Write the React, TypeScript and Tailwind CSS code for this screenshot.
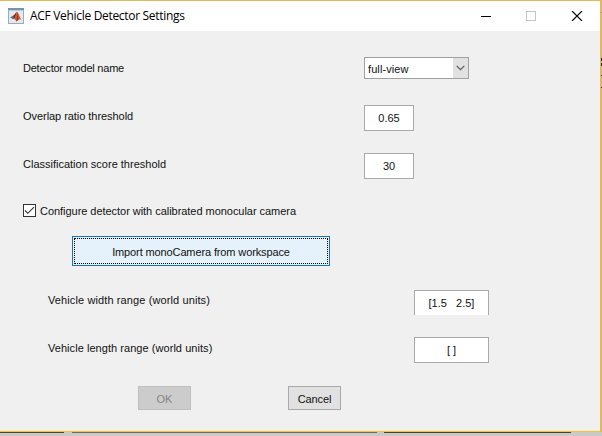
import React from "react";

function MatlabIcon() {
  return (
    <svg width="16" height="16" viewBox="0 0 16 16" className="block shrink-0">
      <rect x="0.5" y="0.5" width="15" height="15" fill="#e2eaf0" stroke="#9aacba" />
      <rect x="0" y="0" width="16" height="2" fill="#7893a8" />
      <rect x="1" y="2" width="14" height="1" fill="#b4d0e2" />
      <path d="M2 9.6 5.3 7.6 7.2 8.8 5.3 11.2Z" fill="#3d7fa8" />
      <path d="M5.3 7.6C7 7 7.6 4.2 8.9 3.8L7.4 9.3 5.6 11Z" fill="#7a2d22" />
      <path d="M8.9 3.8C10.6 4.6 11.6 9.6 13.8 12.2 12.4 10.9 11.2 11 10 12.2L8.4 13.4C7.8 12 7 11.1 5.6 11 7.8 9.6 7.8 5.6 8.9 3.8Z" fill="#d4562b" />
      <path d="M8.9 3.8C9.7 6 9.3 10 8.4 13.4L10 12.2C10.6 9.4 9.8 5.8 8.9 3.8Z" fill="#9c2f1c" />
    </svg>
  );
}

function Field({ children, className }: { children: React.ReactNode; className: string }) {
  return (
    <div className={`flex shrink-0 items-center justify-center whitespace-pre border-[#a9a9a9] bg-white ${className}`}>
      {children}
    </div>
  );
}

export default function App() {
  return (
    <div className="flex h-[436px] w-[602px] flex-col overflow-hidden bg-[#c9c9c5] font-['Liberation_Sans',Arial,sans-serif] text-[11px] leading-[14px] text-[#111]">
      <div className="flex h-[432px] w-full">
        <div className="flex w-[600px] flex-col border-t border-b border-t-[#dfbb55] border-b-[#e8c458] bg-[#f0f0f0]">
          <header className="flex h-[30px] shrink-0 items-center bg-white pl-2">
            <MatlabIcon />
            <h1 className="ml-[6px] w-[155px] whitespace-nowrap font-['Open_Sans','Noto_Sans',sans-serif] text-[12px] leading-[16px] tracking-[-0.31px] text-black">
              ACF Vehicle Detector Settings
            </h1>
            <svg width="153" height="10" viewBox="0 0 153 10" className="ml-[296px] block shrink-0" fill="none">
              <path d="M0 5.5H10" stroke="#000" />
              <rect x="45.5" y="0.5" width="9" height="9" stroke="#c4c4c4" />
              <path d="M91 0 101 10M101 0 91 10" stroke="#000" strokeWidth="1.1" />
            </svg>
          </header>

          <main className="flex flex-1 flex-col border-b border-[#f6e9bd] pt-[26px]">
            <div className="flex h-[22px] items-center pl-[23px]">
              <span className="w-[341px] whitespace-nowrap tracking-[-0.22px]">Detector model name</span>
              <div className="flex h-[22px] w-[105px] border border-[#a0a0a0] bg-white">
                <span className="flex-1 pt-1 pl-[3px] tracking-[0.1px]">full-view</span>
                <span className="flex w-[15px] items-center justify-center bg-[#e1e1e1]">
                  <svg width="9" height="6" viewBox="0 0 9 6" fill="none">
                    <path d="M0.7 0.8 4.5 4.6 8.3 0.8" stroke="#555" strokeWidth="1.1" />
                  </svg>
                </span>
              </div>
            </div>
            <div className="mt-[26px] flex h-[26px] items-center pl-[23px]">
              <span className="w-[341px] whitespace-nowrap pb-1 tracking-[-0.05px]">Overlap ratio threshold</span>
              <Field className="h-[26px] w-[50px] border">0.65</Field>
            </div>
            <div className="mt-[22px] flex h-[26px] items-center pl-[23px]">
              <span className="w-[341px] whitespace-nowrap pb-1">Classification score threshold</span>
              <Field className="h-[26px] w-[50px] border">30</Field>
            </div>
            <div className="mt-[25px] flex h-[13px] items-center pl-[23px]">
              <svg width="13" height="13" viewBox="0 0 13 13" className="mr-1 block shrink-0">
                <rect x="0.5" y="0.5" width="12" height="12" fill="#fff" stroke="#333" />
                <path d="M2 6.5 4.8 9.3 11 3.1" fill="none" stroke="#333" strokeWidth="1.1" />
              </svg>
              <span className="whitespace-nowrap tracking-[-0.04px]">Configure detector with calibrated monocular camera</span>
            </div>
            <div className="mt-[19px] flex pl-[72px]">
              <button className="h-[30px] w-[258px] border border-[#1c73b4] bg-[#e5f1fb] p-px">
                <span className="flex h-full w-full items-center justify-center border border-dotted border-black pt-px tracking-[-0.12px]">
                  Import monoCamera from workspace
                </span>
              </button>
            </div>
            <div className="mt-6 flex h-[25px] items-center pl-12">
              <span className="w-[366px] whitespace-nowrap pb-[5px] tracking-[0.11px]">Vehicle width range (world units)</span>
              <Field className="h-[25px] w-[75px] border border-b-0">[1.5   2.5]</Field>
            </div>
            <div className="mt-[22px] flex h-[26px] items-center pl-12">
              <span className="w-[366px] whitespace-nowrap pb-1 tracking-[0.05px]">Vehicle length range (world units)</span>
              <Field className="h-[26px] w-[75px] border">[ ]</Field>
            </div>
            <div className="mt-[23px] flex gap-[97px] pl-[138px]">
              <button disabled className="h-6 w-[53px] border border-[#bfbfbf] bg-[#cccccc] pt-0.5 text-[#858585]">
                OK
              </button>
              <button className="h-6 w-[53px] border border-[#a9a9a9] bg-[#e1e1e1] pt-0.5 tracking-[-0.1px]">Cancel</button>
            </div>
          </main>
        </div>
        <div className="flex w-0.5 flex-col bg-[#dfb961]">
          <div className="ml-px mt-3 h-px bg-[#c87845]" />
          <div className="ml-px mt-[45px] h-[3px] bg-[#2b2110]" />
          <div className="ml-px mt-0.5 h-[3px] bg-[#2b2110]" />
          <div className="ml-px mt-[9px] h-px bg-[#2b2110]" />
          <div className="ml-px mt-[11px] h-px bg-[#2b2110]" />
        </div>
      </div>
      <div className="flex h-px">
        <div className="w-16 bg-[#4a4634]" />
        <div className="ml-2 w-[305px] bg-[#6e6a5c]" />
        <div className="ml-[7px] w-[187px] bg-[#45412f]" />
      </div>
    </div>
  );
}
